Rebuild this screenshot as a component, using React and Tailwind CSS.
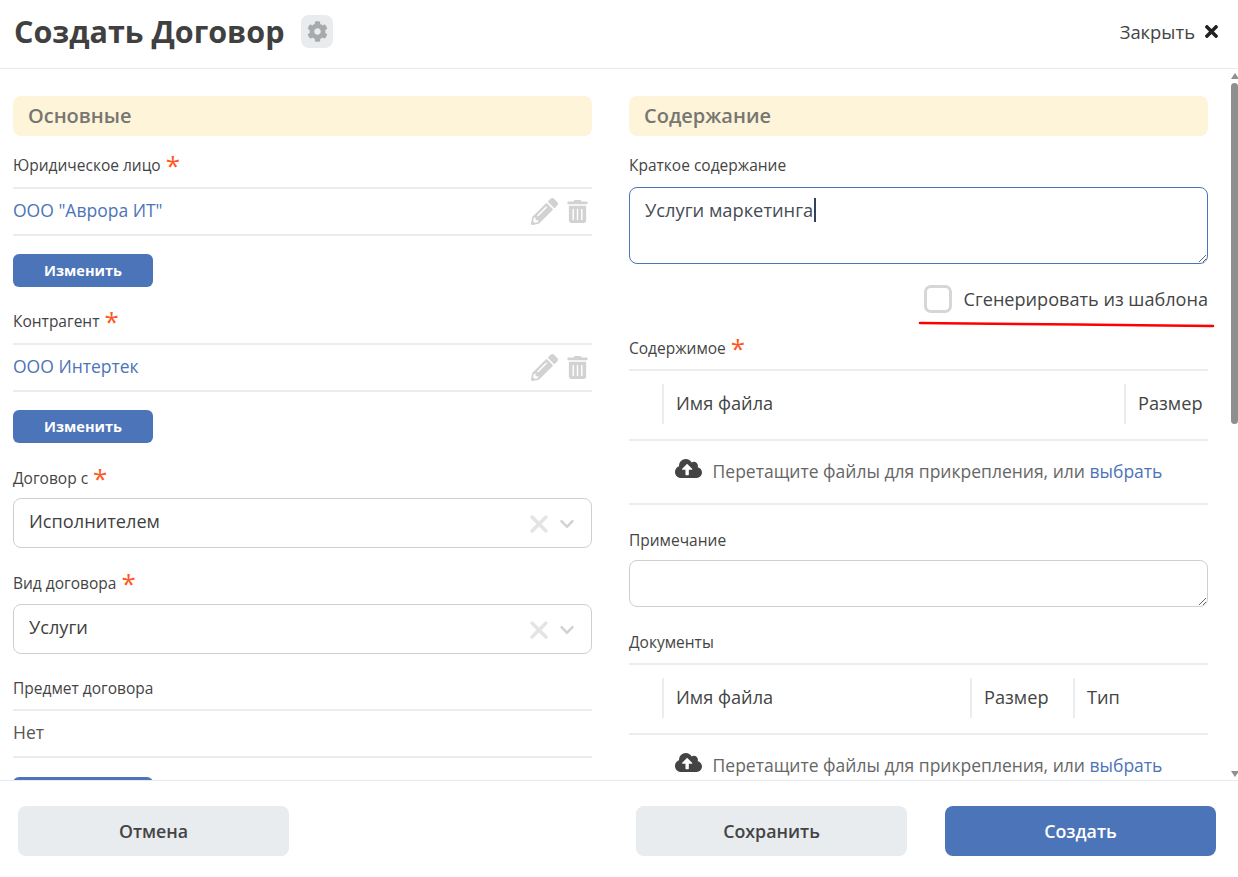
import React from "react";
import { FaCog, FaPencilAlt, FaTrashAlt, FaTimes, FaChevronDown, FaCloudUploadAlt } from "react-icons/fa";
import { X } from "lucide-react";

const Star = () => <span className="text-[26px] leading-[20px] h-[20px] text-[#ff5722] font-normal ml-[5px] relative top-[-1px]">*</span>;

function Label({ children, required, className = "" }) {
  return (
    <div className={`h-[22px] pt-[2px] flex items-center text-[15.5px] font-medium text-[#444444] ${className}`}>
      <span>{children}</span>
      {required && <Star />}
    </div>
  );
}

function Section({ children }) {
  return (
    <div className="h-[40px] rounded-[8px] bg-[#fef4d9] flex items-center pl-[15px] text-[20px] font-semibold text-[#787671]">
      {children}
    </div>
  );
}

function Picked({ name, actions = true, link = true }) {
  return (
    <div className={`h-[49px] border-y-2 border-[#e9edf0] flex items-center justify-between text-[17.5px] ${link ? "text-[#4c74b9]" : "text-[#555555]"}`}>
      <span className="relative top-[-1px]">{name}</span>
      {actions && (
        <span className="flex items-center gap-[8px] pr-[3px] text-[#d2d2d2]">
          <FaPencilAlt size={27} />
          <FaTrashAlt size={23} />
        </span>
      )}
    </div>
  );
}

function ChangeBtn({ className = "" }) {
  return (
    <button className={`w-[140px] h-[33px] rounded-[6px] bg-[#4c74b9] text-white text-[14.5px] font-bold flex items-center justify-center ${className}`}>
      Изменить
    </button>
  );
}

function SelectBox({ value }) {
  return (
    <div className="h-[50px] rounded-[8px] border border-[#cfcfcf] flex items-center justify-between pl-[15px] pr-[16px] text-[18.2px] text-[#3f3f3f]">
      <span className="relative top-[-1px]">{value}</span>
      <span className="flex items-center gap-[6px] relative top-[1px]">
        <X size={28} strokeWidth={3} className="text-[#e4e4e4]" />
        <FaChevronDown size={16} className="text-[#d2d2d2]" />
      </span>
    </div>
  );
}

function HeadCell({ children, className = "" }) {
  return (
    <div className={`h-[40px] border-l-2 border-[#e9edf0] flex items-center pl-[12px] text-[18.2px] font-medium text-[#444444] ${className}`}>
      {children}
    </div>
  );
}

function Drop({ className = "" }) {
  return (
    <div className={`flex items-center justify-center gap-[11px] pb-[2px] text-[17.5px] text-[#666666] ${className}`}>
      <FaCloudUploadAlt size={27} className="text-[#444444] relative top-[-3px]" />
      <span>
        Перетащите файлы для прикрепления, или <span className="text-[#4c74b9]">выбрать</span>
      </span>
    </div>
  );
}

function Foot({ children, primary, className = "" }) {
  return (
    <button className={`w-[271px] h-[50px] rounded-[8px] text-[17.8px] font-semibold flex items-center justify-center ${primary ? "bg-[#4c74b9] text-white" : "bg-[#e8ecef] text-[#444444]"} ${className}`}>
      {children}
    </button>
  );
}

export default function App() {
  return (
    <div className="w-[1238px] h-[877px] flex flex-col bg-white overflow-hidden" style={{ fontFamily: '"Open Sans", "Noto Sans", sans-serif' }}>
      <header className="h-[69px] shrink-0 border-b border-[#e6ebef] flex items-center justify-between pl-[14px] pr-[17px] pb-[5px]">
        <div className="flex items-center gap-[17px]">
          <h1 className="text-[30.5px] font-bold text-[#404040]">Создать Договор</h1>
          <span className="w-[32px] h-[33px] rounded-[8px] bg-[#e8ecef] flex items-center justify-center text-[#a9a9a9]">
            <FaCog size={21} />
          </span>
        </div>
        <div className="flex items-center gap-[7px] text-[18.4px] text-[#444444]">
          <span>Закрыть</span>
          <FaTimes size={19} className="text-[#222222]" />
        </div>
      </header>

      <div className="h-[711px] shrink-0 flex overflow-hidden">
        <main className="w-[1231px] pl-[13px] pr-[23px] pt-[27px] grid grid-cols-[579px_579px] gap-x-[37px] content-start">
          <section className="flex flex-col">
            <Section>Основные</Section>
            <Label required className="mt-[18px]">Юридическое лицо</Label>
            <div className="mt-[11px]"><Picked name={'ООО "Аврора ИТ"'} /></div>
            <ChangeBtn className="mt-[18px]" />
            <Label required className="mt-[23px]">Контрагент</Label>
            <div className="mt-[11px]"><Picked name="ООО Интертек" /></div>
            <ChangeBtn className="mt-[18px]" />
            <Label required className="mt-[24px]">Договор с</Label>
            <div className="mt-[9px]"><SelectBox value="Исполнителем" /></div>
            <Label required className="mt-[24px]">Вид договора</Label>
            <div className="mt-[10px]"><SelectBox value="Услуги" /></div>
            <Label className="mt-[23px]">Предмет договора</Label>
            <div className="mt-[10px]"><Picked name="Нет" actions={false} link={false} /></div>
            <ChangeBtn className="mt-[19px]" />
          </section>

          <section className="flex flex-col">
            <Section>Содержание</Section>
            <Label className="mt-[18px]">Краткое содержание</Label>
            <div className="relative mt-[11px] h-[77px]">
              <textarea
                readOnly
                defaultValue="Услуги маркетинга"
                className="block w-full h-[77px] rounded-[8px] border border-[#4c74b9] pl-[15px] pt-[8px] text-[18.3px] font-medium text-[#444b55] outline-none resize-y"
              />
              <span className="absolute left-[185px] top-[11px] w-[2px] h-[24px] bg-[#33415c]" />
            </div>
            <div className="relative mt-[21px] h-[28px] flex items-center justify-end gap-[12px]">
              <span className="w-[28px] h-[28px] rounded-[7px] border-[3px] border-[#d6d6d6] bg-white" />
              <span className="relative top-[1px] text-[18.1px] font-medium text-[#444444]">Сгенерировать из шаблона</span>
              <svg className="absolute left-[288px] top-[36px]" width="300" height="8" viewBox="0 0 300 8" fill="none">
                <path d="M3 2 C 60 3, 120 3, 160 3.5 S 260 5, 296 5" stroke="#ff0000" strokeWidth="2.5" strokeLinecap="round" />
              </svg>
            </div>
            <Label required className="mt-[24px]">Содержимое</Label>
            <div className="mt-[10px] h-[72px] border-y-2 border-[#e9edf0] flex items-center pb-[2px]">
              <div className="w-[33px]" />
              <HeadCell className="w-[462px]">Имя файла</HeadCell>
              <HeadCell className="flex-1">Размер</HeadCell>
            </div>
            <Drop className="h-[62px]" />
            <div className="h-[2px] bg-[#e9edf0]" />
            <Label className="mt-[24px]">Примечание</Label>
            <textarea
              readOnly
              className="block mt-[9px] w-full h-[47px] rounded-[8px] border border-[#cfcfcf] outline-none resize-y"
            />
            <Label className="mt-[24px]">Документы</Label>
            <div className="mt-[10px] h-[72px] border-y-2 border-[#e9edf0] flex items-center pb-[2px]">
              <div className="w-[33px]" />
              <HeadCell className="w-[308px]">Имя файла</HeadCell>
              <HeadCell className="w-[103px]">Размер</HeadCell>
              <HeadCell className="flex-1">Тип</HeadCell>
            </div>
            <Drop className="h-[62px]" />
          </section>
        </main>

        <div className="w-[7px] flex flex-col items-center">
          <span className="mt-[4px] w-0 h-0 border-x-[4px] border-x-transparent border-b-[6px] border-b-[#8f8f8f]" />
          <span className="mt-[4px] w-[7px] h-[341px] rounded-full bg-[#8f8f8f]" />
          <span className="mt-auto mb-[3px] w-0 h-0 border-x-[4px] border-x-transparent border-t-[6px] border-t-[#8f8f8f]" />
        </div>
      </div>

      <footer className="flex-1 border-t border-[#e6ebef] flex items-start pt-[25px] pl-[18px]">
        <Foot>Отмена</Foot>
        <Foot className="ml-[347px]">Сохранить</Foot>
        <Foot primary className="ml-[38px]">Создать</Foot>
      </footer>
    </div>
  );
}
